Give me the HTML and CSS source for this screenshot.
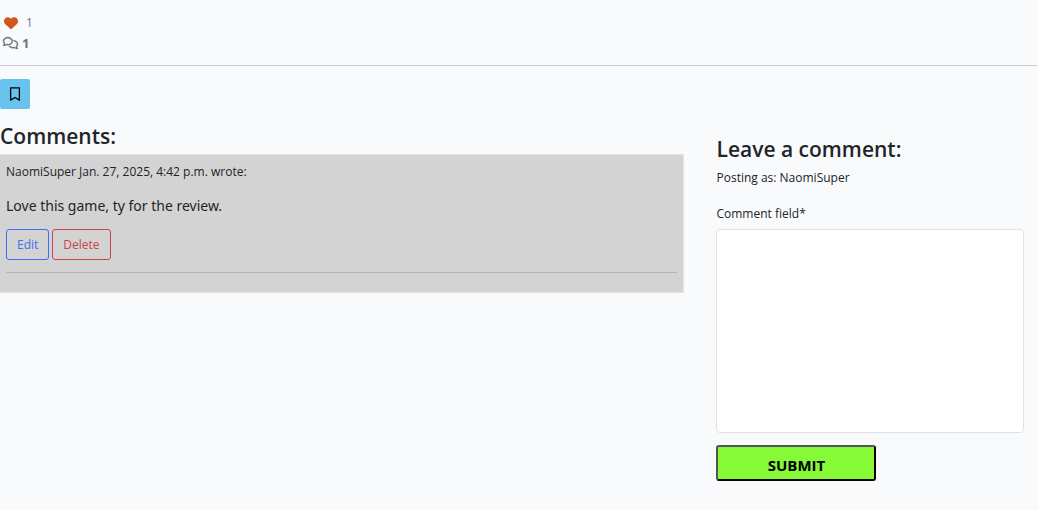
FILE: index.html
```html
<!DOCTYPE html>
<html lang="en">
<head>
<meta charset="utf-8">
<meta name="viewport" content="width=device-width, initial-scale=1">
<title>Comments</title>
<link rel="stylesheet" href="styles.css">
</head>
<body>
<section class="stats">
  <div class="stat">
    <button class="like" type="button" aria-label="Unlike"><svg class="heart" viewBox="0 0 512 512" aria-hidden="true"><path fill="currentColor" d="M47.600 300.400L228.300 469.100c7.500 7 17.400 10.900 27.700 10.900s20.200-3.900 27.700-10.900L464.400 300.400c30.400-28.300 47.600-68 47.600-109.500v-5.800c0-69.900-50.500-129.500-119.400-141C347 36.500 300.600 51.400 268 84L256 96 244 84c-32.600-32.600-79-47.500-124.600-39.900C50.500 55.600 0 115.200 0 185.100v5.800c0 41.500 17.200 81.200 47.600 109.500z"/></svg></button>
    <span class="like-count">1</span>
  </div>
  <div class="stat">
    <svg class="chat" viewBox="0 0 640 512" aria-hidden="true"><path fill="currentColor" stroke="currentColor" stroke-width="12" d="M88.200 309.100c9.800-18.300 6.800-40.800-7.500-55.800C59.400 230.900 48 204 48 176c0-63.500 63.800-128 160-128s160 64.500 160 128s-63.800 128-160 128c-13.100 0-25.800-1.300-37.800-3.600c-10.400-2-21.200-.6-30.700 4.200c-4.100 2.100-8.300 4.100-12.600 6c-16 7.200-32.900 13.500-49.900 18c2.800-4.600 5.400-9.100 7.900-13.600c1.100-1.900 2.200-3.900 3.200-5.900zM208 352c114.900 0 208-78.800 208-176S322.900 0 208 0S0 78.800 0 176c0 41.800 17.200 80.100 45.900 110.300c-.9 1.700-1.900 3.500-2.800 5.100c-10.300 18.400-22.300 36.500-36.600 52.100c-6.600 7-8.300 17.200-4.600 25.900C5.800 378.300 14.400 384 24 384c43 0 86.500-13.300 122.700-29.700c4.800-2.200 9.600-4.500 14.200-6.800c15.100 3 30.900 4.500 47.100 4.500zM432 480c16.200 0 31.900-1.600 47.100-4.500c4.600 2.300 9.400 4.600 14.200 6.800C529.500 498.700 573 512 616 512c9.600 0 18.200-5.700 22-14.500c3.800-8.800 2-19-4.600-25.900c-14.200-15.600-26.200-33.700-36.600-52.100c-.9-1.700-1.900-3.400-2.800-5.100C622.800 384.100 640 345.800 640 304c0-94.400-87.900-171.500-198.200-175.800c4.100 15.200 6.200 31.200 6.200 47.800l0 .6c87.200 6.700 144 67.500 144 127.400c0 28-11.400 54.900-32.700 77.200c-14.300 15-17.300 37.600-7.500 55.800c1.100 2 2.200 4 3.200 5.900c2.500 4.500 5.200 9 7.900 13.600c-17-4.500-33.900-10.700-49.900-18c-4.300-1.900-8.500-3.900-12.600-6c-9.500-4.800-20.300-6.200-30.700-4.200c-12.100 2.400-24.700 3.600-37.800 3.600c-61.700 0-110-26.500-136.800-62.300c-16 5.400-32.800 9.400-50 11.800C279 439.800 350 480 432 480z"/></svg>
    <strong>1</strong>
  </div>
</section>
<hr class="rule">
<button class="bookmark" type="button" aria-label="Bookmark"><svg viewBox="0 0 16 16" aria-hidden="true"><path fill="none" stroke="currentColor" stroke-width="1.500" stroke-linejoin="round" d="M3 1h10v14l-5-3-5 3z"/></svg></button>
<main class="columns">
  <section class="comments">
    <h3>Comments:</h3>
    <article class="card">
      <p class="meta">NaomiSuper Jan. 27, 2025, 4:42 p.m. wrote:</p>
      <p class="message">Love this game, ty for the review.</p>
      <div class="actions">
        <button class="btn edit" type="button">Edit</button>
        <button class="btn delete" type="button">Delete</button>
      </div>
      <hr class="card-rule">
    </article>
  </section>
  <section class="reply">
    <h3>Leave a comment:</h3>
    <p class="posting">Posting as: NaomiSuper</p>
    <form>
      <label for="comment">Comment field*</label>
      <textarea id="comment" rows="10" required></textarea>
      <button class="submit" type="submit">SUBMIT</button>
    </form>
  </section>
</main>
</body>
</html>
```
FILE: styles.css
```css
* { box-sizing: border-box; }
body {
  margin: 0;
  background: #f9fafc;
  color: #212529;
  font-family: "Segoe UI", "Open Sans", "Noto Sans", sans-serif;
  font-size: 12px;
  line-height: 20px;
}
h3, p { margin: 0; }
h3 { font-size: 21px; font-weight: 600; line-height: 26px; }
button, textarea { font: inherit; }
.stats { padding: 13px 3px 12px; color: #6c757d; }
.stat { display: flex; align-items: center; height: 20px; gap: 4px; }
.stat strong { font-size: 13px; }
.like { display: flex; padding: 0 0 0 1px; border: 0; background: none; color: #d2571e; }
.heart { width: 14px; height: 14px; }
.like-count { margin-left: 4px; }
.chat { width: 15px; height: 12px; overflow: visible; }
.rule { margin: 0 1px 13px 0; border: 0; border-top: 1px solid #cbcdd0; }
.bookmark {
  display: grid;
  place-items: center;
  width: 30px;
  height: 30px;
  padding: 0;
  border: 0;
  border-radius: 2px;
  background: #68c4ef;
  color: #000;
}
.bookmark svg { width: 14px; height: 14px; }
.columns {
  display: grid;
  grid-template-columns: 69fr 31fr;
  gap: 32px;
  align-items: start;
  padding: 14px 14px 0 0;
}
.card {
  margin-top: 5px;
  padding: 7px 6px 19px;
  border: 1px solid #e2e4e7;
  border-left: 0;
  background: #d3d3d3;
}
.message {
  margin: 12px 0 11px;
  font-family: "Segoe UI", "Noto Sans", "Open Sans", sans-serif;
  font-size: 14px;
  line-height: 24px;
}
.actions { display: flex; gap: 3px; }
.btn {
  height: 31px;
  padding: 0 10px;
  border: 1px solid;
  border-radius: 3px;
  background: transparent;
}
.edit { color: #3f70f4; }
.delete { color: #cb444b; }
.card-rule { margin: 12px 0 0; border: 0; border-top: 1px solid #b5b5b6; }
.reply { padding-top: 13px; }
.posting { margin: 6px 0 16px; }
.reply label { display: block; margin-bottom: 5px; }
.reply textarea {
  display: block;
  width: 100%;
  height: 204px;
  padding: 6px 10px;
  border: 1px solid #dee2e6;
  border-radius: 4px;
  background: #fff;
  resize: none;
}
.submit {
  width: 160px;
  height: 36px;
  margin-top: 12px;
  padding: 3px 0 0;
  border: 2px outset #000;
  border-radius: 3px;
  background: #86fa37;
  color: #000;
  font-size: 15px;
  font-weight: 700;
}
```
